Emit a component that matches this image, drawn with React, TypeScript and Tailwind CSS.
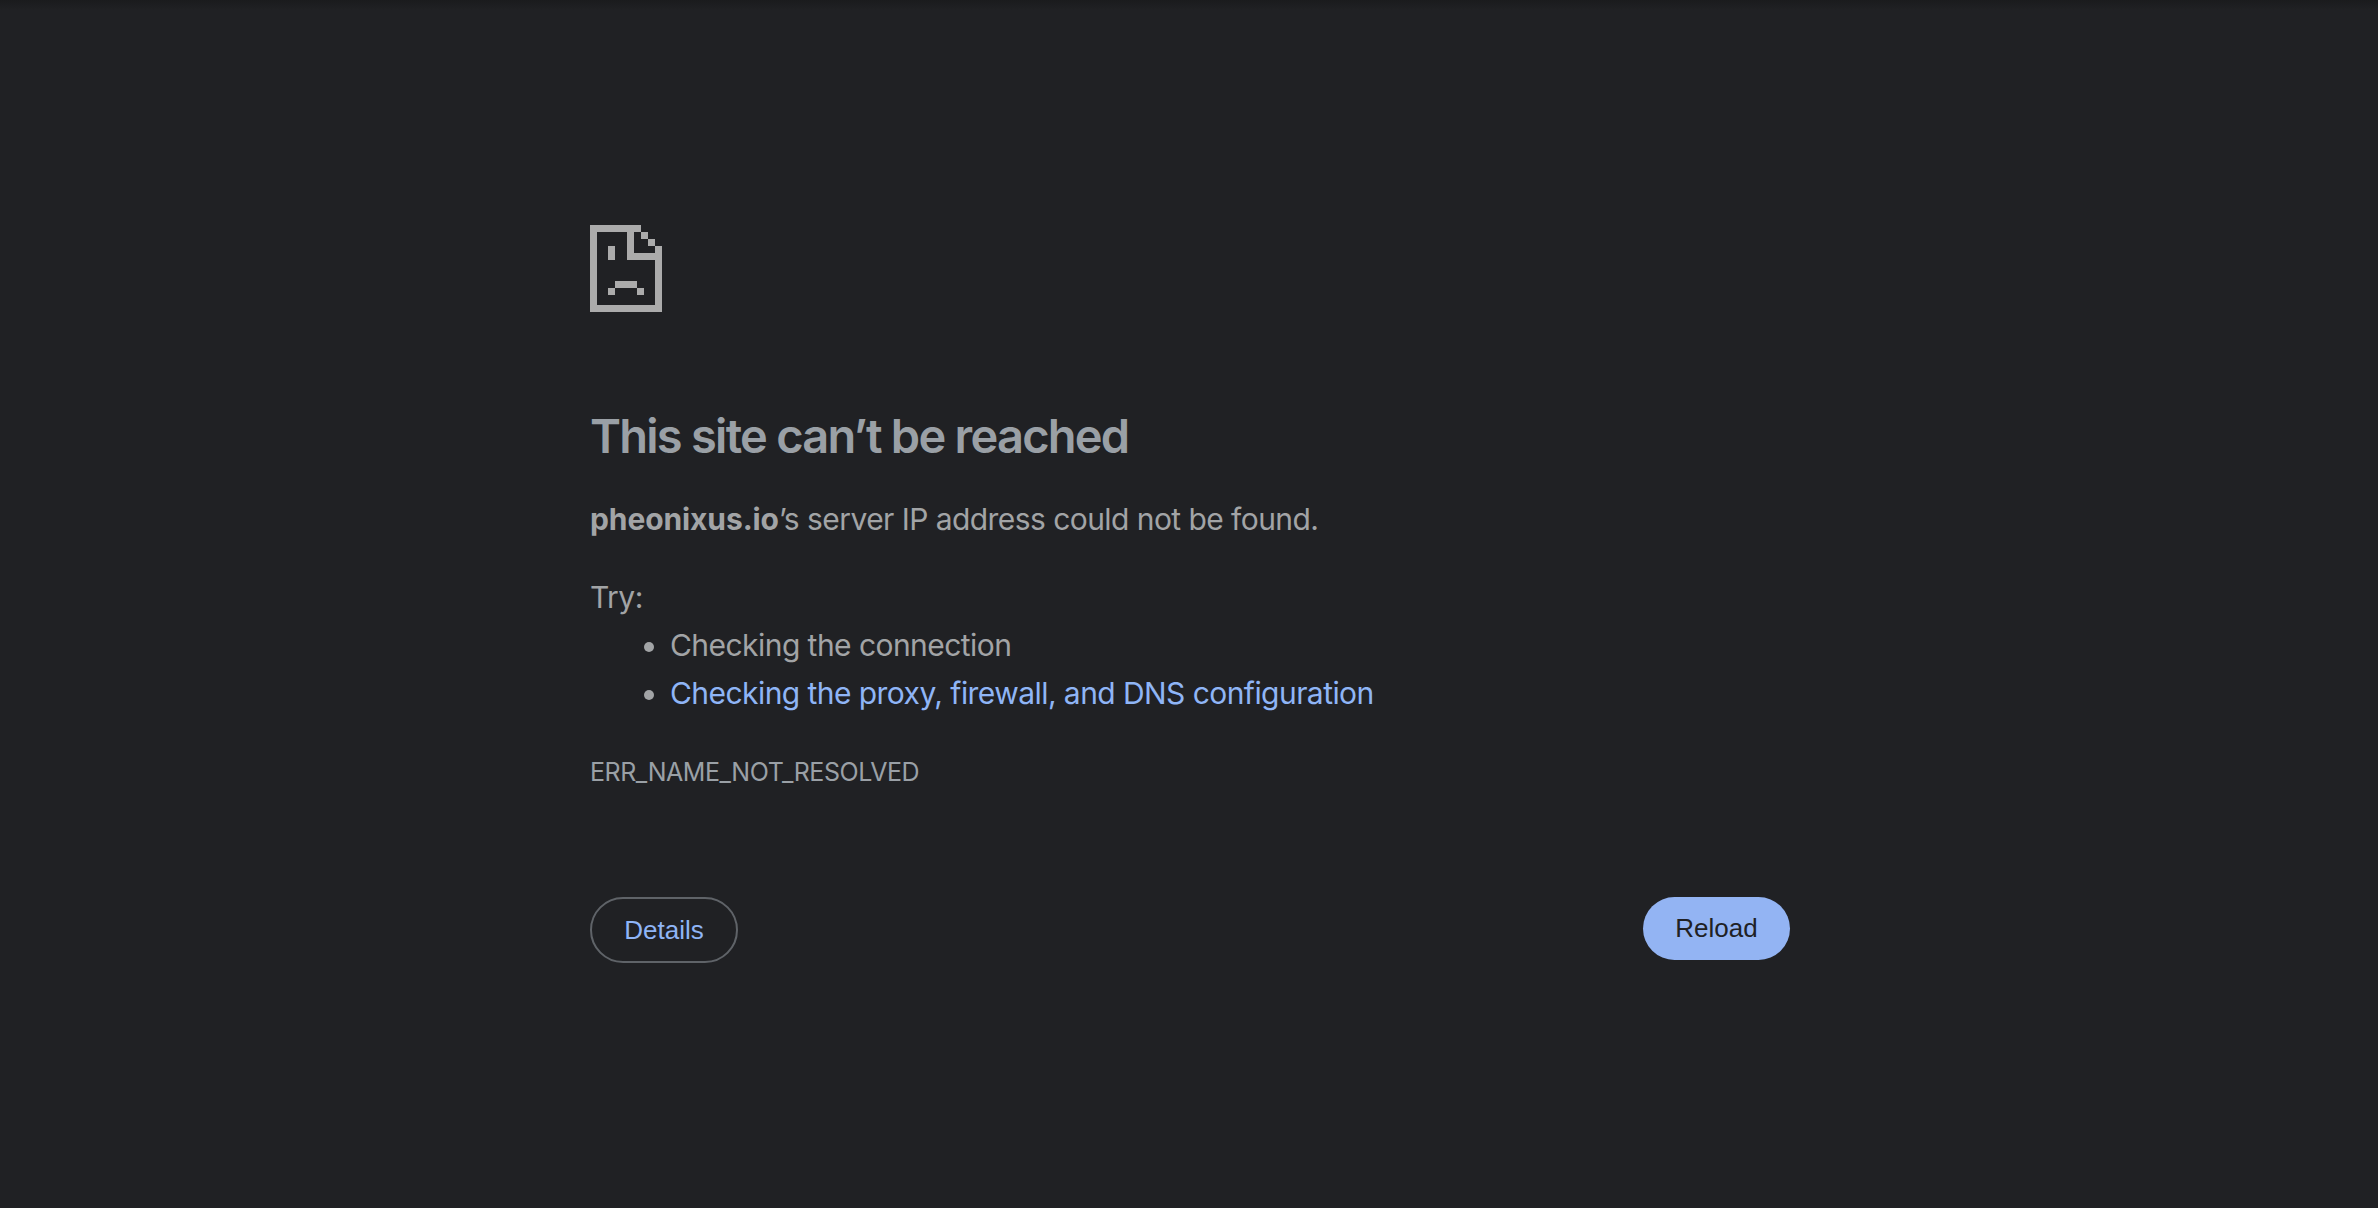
import React from 'react';

const FONT = "font-['Inter','Noto_Sans',sans-serif]";

function SadPageIcon() {
  // pixel art from Chrome's error page, coordinates are in 1/3 px
  return (
    <svg width="72" height="87" viewBox="0 0 216 261" fill="#ababab" shapeRendering="crispEdges">
      <path d="M0 0H153V21H132V84H195V63H216V261H0V0ZM21 21V240H195V105H111V21H21Z" fillRule="evenodd" />
      <rect x="153" y="21" width="21" height="21" />
      <rect x="174" y="42" width="21" height="21" />
      <rect x="54" y="63" width="21" height="42" />
      <rect x="75" y="168" width="66" height="21" />
      <rect x="54" y="189" width="21" height="21" />
      <rect x="141" y="189" width="21" height="21" />
    </svg>
  );
}

export default function App() {
  return (
    <div className={`min-h-screen bg-[#202124] ${FONT}`}>
      {/* toolbar shadow falling on the page */}
      <div className="h-[10px] bg-gradient-to-b from-[#1a1b1d] to-[#202124]" />
      <div className="w-[1200px] ml-[590px] pt-[215px]">
        <SadPageIcon />

        <h1 className="mt-[94px] text-[47px] leading-[60px] font-semibold text-[#9aa0a6] tracking-[-1.75px]">
          This site can’t be reached
        </h1>
        <p className="mt-[29px] text-[30px] leading-[48px] text-[#a2a4a6] tracking-[-0.56px]">
          <strong className="font-bold tracking-[-0.1px]">pheonixus.io</strong>’s server IP address could not be found.
        </p>

        <p className="mt-[30px] text-[30px] leading-[48px] text-[#a2a4a6] tracking-[-0.55px]">Try:</p>
        <ul className="list-disc pl-[80px] text-[30px] text-[#a2a4a6] tracking-[-0.55px]">
          <li className="leading-[48px]">Checking the connection</li>
          <li className="leading-[48px]">
            <a className="text-[#8fb5f6] tracking-[-0.56px]">Checking the proxy, firewall, and DNS configuration</a>
          </li>
        </ul>

        <div className="mt-[37px] text-[25px] leading-[36px] text-[#9aa0a6] tracking-[-0.45px]">ERR_NAME_NOT_RESOLVED</div>

        <div className="mt-[107px] flex items-start justify-between font-['Liberation_Sans',sans-serif] text-[26px]">
          <button className="w-[148px] h-[66px] rounded-full border-2 border-[#5f6368] text-[#8fb5f6]">Details</button>
          <button className="w-[147px] h-[63px] rounded-full bg-[#93b4f3] text-[#202124]">Reload</button>
        </div>
      </div>
    </div>
  );
}
